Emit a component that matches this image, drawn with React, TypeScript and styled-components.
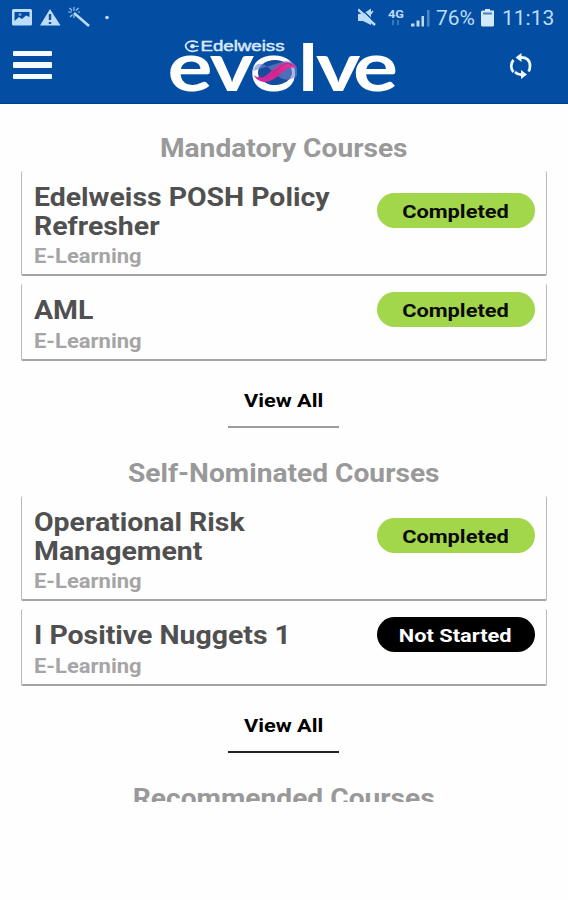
import React from 'react';
import styled, { createGlobalStyle } from 'styled-components';

const GlobalStyle = createGlobalStyle`
  * { box-sizing: border-box; }
  body { margin: 0; background: #fefefe; font-family: Roboto, sans-serif; }
`;

const Screen = styled.div`
  width: 568px;
  height: 900px;
  overflow: hidden;
  background: #fefefe;
`;

const Header = styled.header`
  height: 104px;
  background: #034ea2;
  border-bottom: 1px solid #03408c;
`;

const StatusBar = styled.div`
  height: 36px;
  padding: 0 14px 0 12px;
  display: flex;
  align-items: center;
  justify-content: space-between;
  color: #bcdcfa;
`;

const StatusText = styled.span<{ $width: number }>`
  width: ${(p) => p.$width}px;
  font-size: 21px;
  line-height: 36px;
  white-space: nowrap;
`;

const StatusGroup = styled.div`
  display: flex;
  align-items: center;
  height: 36px;
`;

const AppBar = styled.div`
  height: 67px;
  padding: 0 35px 0 13px;
  display: grid;
  grid-template-columns: 157px 228px 1fr;
  align-items: start;
`;

const MenuButton = styled.button`
  margin: 14.5px 0 0;
  padding: 0;
  width: 38.5px;
  height: 28.5px;
  border: 0;
  background: none;
  display: flex;
  flex-direction: column;
  justify-content: space-between;
`;

const MenuBar = styled.span`
  display: block;
  height: 5.5px;
  border-radius: 1px;
  background: #f4fbff;
`;

const SyncButton = styled.button`
  justify-self: end;
  margin: 16px 0 0;
  padding: 0;
  width: 24px;
  height: 28px;
  border: 0;
  background: none;
`;

const Content = styled.main`
  height: 698px;
  padding: 27px 21.5px 0 21px;
  overflow: hidden;
`;

const Section = styled.section`
  height: 325px;
  display: flex;
  flex-direction: column;
`;

const Heading = styled.h2<{ $stretch: number }>`
  margin: 0 0 5.5px;
  height: 34px;
  font-size: 25px;
  line-height: 35px;
  font-weight: 700;
  text-align: center;
  color: #999;
  white-space: nowrap;
  transform: scaleX(${(p) => p.$stretch});
`;

const Card = styled.article`
  margin-bottom: 8px;
  padding: 12px 11px 4.7px 11.5px;
  border: solid #b9b9b9;
  border-width: 0 1.5px 2.5px;
  border-bottom-color: #a3a3a3;
  border-radius: 2px;
`;

const CardTop = styled.div`
  display: flex;
  align-items: center;
  justify-content: space-between;
`;

const Title = styled.h3`
  margin: 0;
  width: 275px;
  font-size: 25.5px;
  line-height: 29.3px;
  font-weight: 700;
  color: #505050;
  transform: scaleX(1.115);
  transform-origin: left;
`;

const Kind = styled.p`
  margin: 4.4px 0 0;
  font-size: 19.3px;
  line-height: 24px;
  font-weight: 700;
  color: #a5a5a5;
  transform: scaleX(1.14);
  transform-origin: left;
`;

const Pill = styled.span<{ $done: boolean }>`
  flex: none;
  width: 158px;
  height: 35.5px;
  margin: -4.5px 0 -2px;
  border-radius: 18px;
  display: flex;
  align-items: center;
  justify-content: center;
  background: ${(p) => (p.$done ? '#a2d64b' : '#000')};
  color: ${(p) => (p.$done ? '#0b0b0b' : '#fff')};
`;

const Label = styled.span`
  font-size: 19px;
  line-height: 24px;
  padding-top: 2px;
  font-weight: 700;
  white-space: nowrap;
  transform: scaleX(1.147);
`;

const ViewAll = styled.button<{ $dark: boolean }>`
  align-self: center;
  margin: 18px 0 0;
  padding: 0 0 13px;
  width: 111px;
  border: 0;
  border-bottom: 2px solid ${(p) => (p.$dark ? '#222' : '#9c9c9c')};
  background: none;
  display: flex;
  justify-content: center;
  font-family: inherit;
  color: #000;
`;

interface Course { title: string; done: boolean }
interface Group { name: string; stretch: number; dark: boolean; courses: Course[] }

const groups: Group[] = [
  {
    name: 'Mandatory Courses', stretch: 1.126, dark: false,
    courses: [
      { title: 'Edelweiss POSH Policy Refresher', done: true },
      { title: 'AML', done: true },
    ],
  },
  {
    name: 'Self-Nominated Courses', stretch: 1.126, dark: true,
    courses: [
      { title: 'Operational Risk Management', done: true },
      { title: 'I Positive Nuggets 1', done: false },
    ],
  },
  { name: 'Recommended Courses', stretch: 1.126, dark: false, courses: [] },
];

const Notifications = () => (
  <svg width="100" height="36" viewBox="0 0 100 36" fill="#bcdcfa">
    <path fillRule="evenodd" d="M1.500 9H18.500Q20 9 20 10.500V24Q20 25.500 18.500 25.500H1.500Q0 25.500 0 24V10.500Q0 9 1.500 9ZM2.500 12V21L7 17L10 19L14 15.500L17.500 17V12Z" />
    <circle cx="8" cy="14.500" r="1.500" opacity=".6" />
    <path d="M38 9L48.500 25.500H28Z" />
    <path d="M38 14V20M38 22V24" stroke="#174e8e" strokeWidth="2.400" />
    <path d="M62 13L77 26" stroke="#bcdcfa" strokeWidth="2.600" />
    <path d="M62 7V11M56 12H60M57.500 8L60 10.500M66.500 8L64 10.500M58 17L60.500 14.500M66 12H68M62 15V18" stroke="#9cc2ea" strokeWidth="1.200" />
    <circle cx="95" cy="17.500" r="1.800" />
  </svg>
);

const Signals = () => (
  <svg width="78" height="36" viewBox="0 0 78 36" fill="#bcdcfa">
    <path d="M0 14H5L13 8.500V25L5 21H0Z" />
    <path d="M2 8L18 23" stroke="#034ea2" strokeWidth="1.500" />
    <path d="M0 9.500L17 25" stroke="#bcdcfa" strokeWidth="2.400" />
    <path d="M15 11L12.500 14" stroke="#bcdcfa" strokeWidth="1.500" />
    <text x="30" y="18" fontFamily="Roboto, sans-serif" fontSize="11.500" fontWeight="700" textLength="16" lengthAdjust="spacingAndGlyphs">4G</text>
    <path d="M35 20V25M40 20V25" stroke="#3d77b9" strokeWidth="2" />
    <path d="M53 23.500h3.500v3H53zM58.500 20.500h3v6h-3zM63.500 16h2.500v10.500h-2.500z" />
    <path d="M69 10h2.500v16.500h-2.500z" opacity=".4" />
  </svg>
);

const Battery = () => (
  <svg width="22" height="36" viewBox="0 0 22 36">
    <path d="M5 9H10V10.500H14V25Q14 26.500 12.500 26.500H2.500Q1 26.500 1 25V12Q1 10.500 2.500 10.500H5Z" fill="#d4e9f8" />
    <path d="M3 13.500H12" stroke="#4f80b4" strokeWidth="2" />
  </svg>
);

const Logo = () => (
  <svg width="228" height="64" viewBox="170 37 228 64" fill="#fff">
    <defs>
      <linearGradient id="ribbon" x1="0" y1="1" x2="1" y2="0">
        <stop offset="0" stopColor="#d72aa6" />
        <stop offset=".5" stopColor="#d62687" />
        <stop offset="1" stopColor="#d83fa5" />
      </linearGradient>
    </defs>
    <path d="M198 43.500Q190 40.500 186.500 44.500Q184.500 47 187 50Q190.500 54 198 51" fill="none" stroke="#d9e9fb" strokeWidth="1.700" />
    <circle cx="192.500" cy="47.300" r="2.300" fill="#d9e9fb" />
    <path d="M193 47.300H199" stroke="#d9e9fb" strokeWidth="1.300" />
    <text x="200.500" y="52.300" fontFamily="Liberation Sans, sans-serif" fontSize="14" textLength="84" lengthAdjust="spacingAndGlyphs" fill="#d9e9fb" stroke="#d9e9fb" strokeWidth=".45">Edelweiss</text>
    <text transform="scale(1.22 1)" x="137.300 172 204.500 244.500 259 289.300" y="91.500" fontFamily="Lato, sans-serif" fontSize="69" fontWeight="700">evo<tspan fontSize="65">l</tspan>ve</text>
    <ellipse cx="275" cy="73.500" rx="17" ry="12.500" fill="#164c9d" />
    <path d="M253 72C255 62 263 64 269 69C279 79 286 85 297 77V70C295 63 291 62 285 62" fill="#7287d0" opacity=".6" />
    <path d="M253.500 76C263 83 268 74 275 69C283 62 291 61 297 69C289 67 284 72 278 77C270 84 259 86 253.500 76Z" fill="url(#ribbon)" />
    <path d="M258 78Q268 81 277 71T292 66" fill="none" stroke="#9c2fa0" strokeWidth="1" />
  </svg>
);

const Sync = () => (
  <svg width="24" height="28" viewBox="0 0 24 28">
    <path d="M4.500 20A9 9 0 0 1 4.500 8M11 5.500Q21 5 21 14Q21 17.500 19.500 19.500M13 22.500Q9 23 6 20" fill="none" stroke="#f0faff" strokeWidth="2.700" />
    <path d="M12.500 1V10L6.500 5.500ZM12 18V27L18 22.500Z" fill="#f0faff" />
  </svg>
);

export default function App() {
  return (
    <Screen>
      <GlobalStyle />
      <Header>
        <StatusBar>
          <Notifications />
          <StatusGroup>
            <Signals />
            <StatusText $width={44}>76%</StatusText>
            <Battery />
            <StatusText $width={52}>11:13</StatusText>
          </StatusGroup>
        </StatusBar>
        <AppBar>
          <MenuButton aria-label="Menu"><MenuBar /><MenuBar /><MenuBar /></MenuButton>
          <Logo />
          <SyncButton aria-label="Sync"><Sync /></SyncButton>
        </AppBar>
      </Header>
      <Content>
        {groups.map((g) => (
          <Section key={g.name}>
            <Heading $stretch={g.stretch}>{g.name}</Heading>
            {g.courses.map((c) => (
              <Card key={c.title}>
                <CardTop>
                  <Title>{c.title}</Title>
                  <Pill $done={c.done}><Label>{c.done ? 'Completed' : 'Not Started'}</Label></Pill>
                </CardTop>
                <Kind>E-Learning</Kind>
              </Card>
            ))}
            {g.courses.length > 0 && <ViewAll $dark={g.dark}><Label>View All</Label></ViewAll>}
          </Section>
        ))}
      </Content>
    </Screen>
  );
}
